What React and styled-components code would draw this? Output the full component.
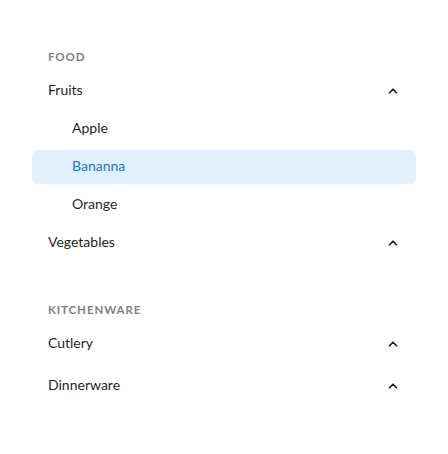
import React, { useState } from 'react';
import styled, { createGlobalStyle } from 'styled-components';
import { ChevronUp } from 'lucide-react';

const GlobalStyle = createGlobalStyle`
  body {
    margin: 0;
    background: #ffffff;
    font-family: 'Lato', 'Open Sans', sans-serif;
  }
`;

const Nav = styled.nav`
  display: flex;
  flex-direction: column;
  gap: 34px;
  padding: 49px 32px;
`;

const Section = styled.div`
  display: flex;
  flex-direction: column;
`;

const Heading = styled.div`
  height: 16px;
  line-height: 16px;
  padding-left: 16px;
  margin-bottom: 9px;
  font-size: 11.5px;
  font-weight: 700;
  letter-spacing: 0.9px;
  text-transform: uppercase;
  color: #808080;
`;

const Group = styled.div`
  display: flex;
  flex-direction: column;
  gap: 4px;
  margin-bottom: ${(p) => (p.$open ? '4px' : '8px')};
`;

const Row = styled.div`
  display: flex;
  align-items: center;
  justify-content: space-between;
  height: 34px;
  padding: 0 16px 0 ${(p) => (p.$child ? '40px' : '16px')};
  border-radius: 6px;
  font-size: 14px;
  line-height: 1;
  color: ${(p) => (p.$active ? '#1f74e0' : '#1f1f1f')};
  background: ${(p) => (p.$active ? '#dff0fe' : 'transparent')};
  cursor: pointer;
`;

const Label = styled.span`
  position: relative;
  top: -1px;
`;

const Caret = styled(ChevronUp)`
  color: #222;
  flex: none;
`;

const data = [
  {
    title: 'Food',
    items: [
      { label: 'Fruits', children: ['Apple', 'Bananna', 'Orange'] },
      { label: 'Vegetables' },
    ],
  },
  {
    title: 'Kitchenware',
    items: [{ label: 'Cutlery' }, { label: 'Dinnerware' }],
  },
];

const App = () => {
  const [active, setActive] = useState('Bananna');

  return (
    <>
      <GlobalStyle />
      <Nav>
        {data.map((section) => (
          <Section key={section.title}>
            <Heading>{section.title}</Heading>
            {section.items.map((item) => (
              <Group key={item.label} $open={!!item.children}>
                <Row>
                  <Label>{item.label}</Label>
                  <Caret size={14} strokeWidth={3} />
                </Row>
                {item.children &&
                  item.children.map((c) => (
                    <Row key={c} $child $active={active === c} onClick={() => setActive(c)}>
                      <Label>{c}</Label>
                    </Row>
                  ))}
              </Group>
            ))}
          </Section>
        ))}
      </Nav>
    </>
  );
};

export default App;
